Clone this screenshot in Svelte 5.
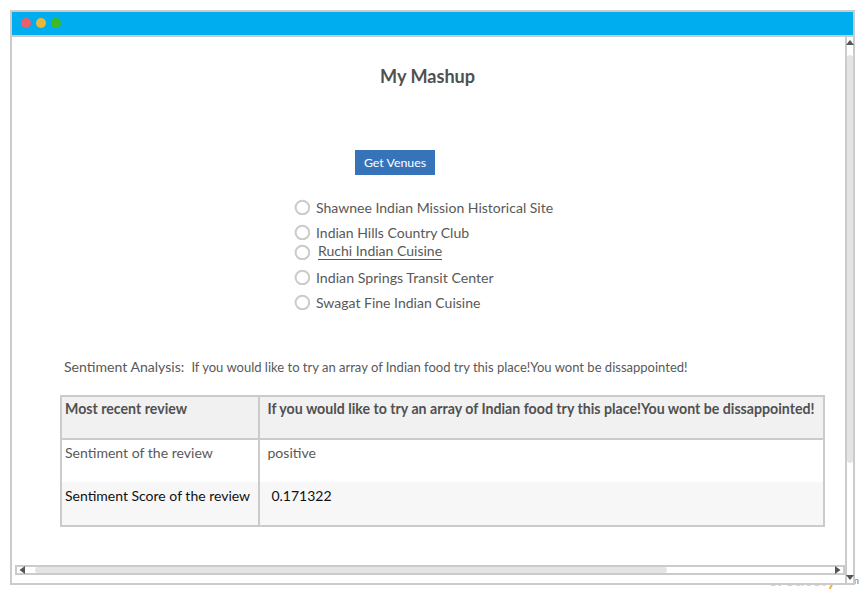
<script>
  const venues = [
    { name: 'Shawnee Indian Mission Historical Site', height: 25 },
    { name: 'Indian Hills Country Club', height: 20 },
    { name: 'Ruchi Indian Cuisine', height: 25, link: true },
    { name: 'Indian Springs Transit Center', height: 25 },
    { name: 'Swagat Fine Indian Cuisine', height: 25 }
  ];
  const review = 'If you would like to try an array of Indian food try this place!You wont be dissappointed!';
</script>

<div class="page">
  <div class="brand"><span>createl</span><span class="accent">y</span></div>
  <div class="domain">.com</div>

  <div class="window">
    <header>
      <i class="dot red"></i><i class="dot yellow"></i><i class="dot green"></i>
    </header>
    <div class="body">
      <div class="view">
        <main>
          <h1><span>My Mashup</span></h1>
          <button>Get Venues</button>
          <ul>
            {#each venues as venue}
              <li style="height: {venue.height}px">
                <svg width="16" height="16" viewBox="0 0 16 16">
                  <circle cx="8.4" cy="8.5" r="6.8" fill="#fff" stroke="#cbcbcb" stroke-width="2" />
                </svg>
                <span class:link={venue.link}>{venue.name}</span>
              </li>
            {/each}
          </ul>
          <p><span class="label">Sentiment Analysis:</span><span class="quote">{review}</span></p>
          <div class="table">
            <div class="row head">
              <div class="cell first"><span>Most recent review</span></div>
              <div class="cell"><span>{review}</span></div>
            </div>
            <div class="row">
              <div class="cell first"><span>Sentiment of the review</span></div>
              <div class="cell"><span>positive</span></div>
            </div>
            <div class="row score">
              <div class="cell first"><span>Sentiment Score of the review</span></div>
              <div class="cell"><span>0.171322</span></div>
            </div>
          </div>
        </main>
        <div class="hbar">
          <svg width="6" height="8" viewBox="0 0 6 8"><path d="M6 0V8L0.5 4Z" fill="#555" /></svg>
          <div class="hthumb"></div>
          <svg class="right" width="6" height="8" viewBox="0 0 6 8"><path d="M0 0V8L5.5 4Z" fill="#555" /></svg>
        </div>
      </div>
      <div class="vbar">
        <svg width="8" height="5" viewBox="0 0 8 5"><path d="M0 5H8L4 0Z" fill="#555" /></svg>
        <div class="vthumb"></div>
        <svg class="down" width="8" height="5" viewBox="0 0 8 5"><path d="M0 0H8L4 5Z" fill="#555" /></svg>
      </div>
    </div>
  </div>
</div>

<style>
  * { box-sizing: border-box; }
  .page {
    position: relative;
    width: 865px;
    height: 595px;
    padding: 10px;
    overflow: hidden;
    background: #fff;
    color: #595959;
    font: 14px/20px Lato, sans-serif;
    white-space: nowrap;
  }
  .brand {
    position: absolute;
    left: 768px;
    top: 568px;
    font-size: 18.5px;
    font-weight: 700;
    line-height: 22px;
    letter-spacing: 0.4px;
    color: #c3d9ea;
  }
  .accent { color: #fbb040; }
  .domain {
    position: absolute;
    left: 838px;
    top: 574px;
    font-size: 10px;
    line-height: 12px;
    color: #777;
  }
  .window {
    position: relative;
    width: 845px;
    height: 575px;
    border: 2px solid #cbcbcb;
    background: #fff;
  }
  header {
    display: flex;
    gap: 5px;
    height: 25px;
    padding: 6px 0 0 9px;
    border-bottom: 2px solid #cbcbcb;
    background: #00adef;
  }
  .dot { width: 10px; height: 10px; border-radius: 50%; }
  .red { background: #e9606c; }
  .yellow { background: #ebb738; }
  .green { background: #3dbb1e; }
  .body { display: flex; height: 546px; }
  .view { flex: none; width: 833px; }
  main {
    display: flex;
    flex-direction: column;
    height: 528px;
    padding-left: 48px;
  }
  h1 {
    margin: 27px 0 0 320px;
    font-size: 18.1px;
    line-height: 24px;
    font-weight: 700;
    color: #505050;
  }
  button {
    width: 80px;
    height: 25px;
    margin: 62px 0 0 295px;
    padding: 0;
    border: 0;
    background: #3673b8;
    color: #fff;
    font: 12.35px/25px Lato, sans-serif;
  }
  ul {
    height: 120px;
    margin: 24px 0 0 234px;
    padding: 0;
    list-style: none;
  }
  li { display: flex; gap: 6px; }
  li svg { flex: none; }
  li span { line-height: 18px; font-size: 14.03px; }
  li:nth-child(4) span { font-size: 14.18px; }
  .link {
    align-self: flex-start;
    height: 17px;
    margin: -1px 0 0 2px;
    border-bottom: 1px solid #595959;
    line-height: 15px;
  }
  p { display: flex; margin: 38px 0 0 4px; }
  .label { width: 127.4px; font-size: 14.08px; }
  .quote { font-size: 13.02px; }
  .table {
    width: 765px;
    height: 132px;
    margin-top: 18px;
    border: 2px solid #cbcbcb;
    font-size: 14.05px;
  }
  .row { display: flex; height: 42px; }
  .head {
    height: 43px;
    border-bottom: 2px solid #cbcbcb;
    background: #f1f1f1;
    font-weight: 700;
    font-size: 14.16px;
    color: #505050;
  }
  .score { height: 43px; background: #f7f7f7; color: #111; font-size: 14px; }
  .cell { padding: 3px 0 0 7.5px; }
  .first {
    flex: none;
    width: 198px;
    padding-left: 3px;
    border-right: 2px solid #cbcbcb;
  }
  .head .cell { padding-top: 2px; }
  .score .cell { padding-top: 4px; }
  .score .cell:last-child { padding-left: 11.4px; }
  .hbar {
    display: flex;
    width: 830px;
    height: 10px;
    margin-left: 3px;
    padding-left: 2px;
    border: 2px solid #cbcbcb;
    background: #fff;
  }
  .hbar svg { flex: none; margin-top: -1px; }
  .hthumb {
    width: 632px;
    height: 6px;
    margin-left: 10px;
    border-radius: 3px;
    background: #e4e4e4;
  }
  .hbar .right { margin-left: 168px; }
  .vbar {
    flex: none;
    width: 8px;
    height: 546px;
    border-left: 2px solid #cbcbcb;
  }
  .vbar svg { display: block; margin: 3px 0 0 -1px; }
  .vthumb {
    width: 6px;
    height: 408px;
    margin-top: 10px;
    border-radius: 3px;
    background: #e4e4e4;
  }
  .vbar .down { margin-top: 112px; }
</style>
